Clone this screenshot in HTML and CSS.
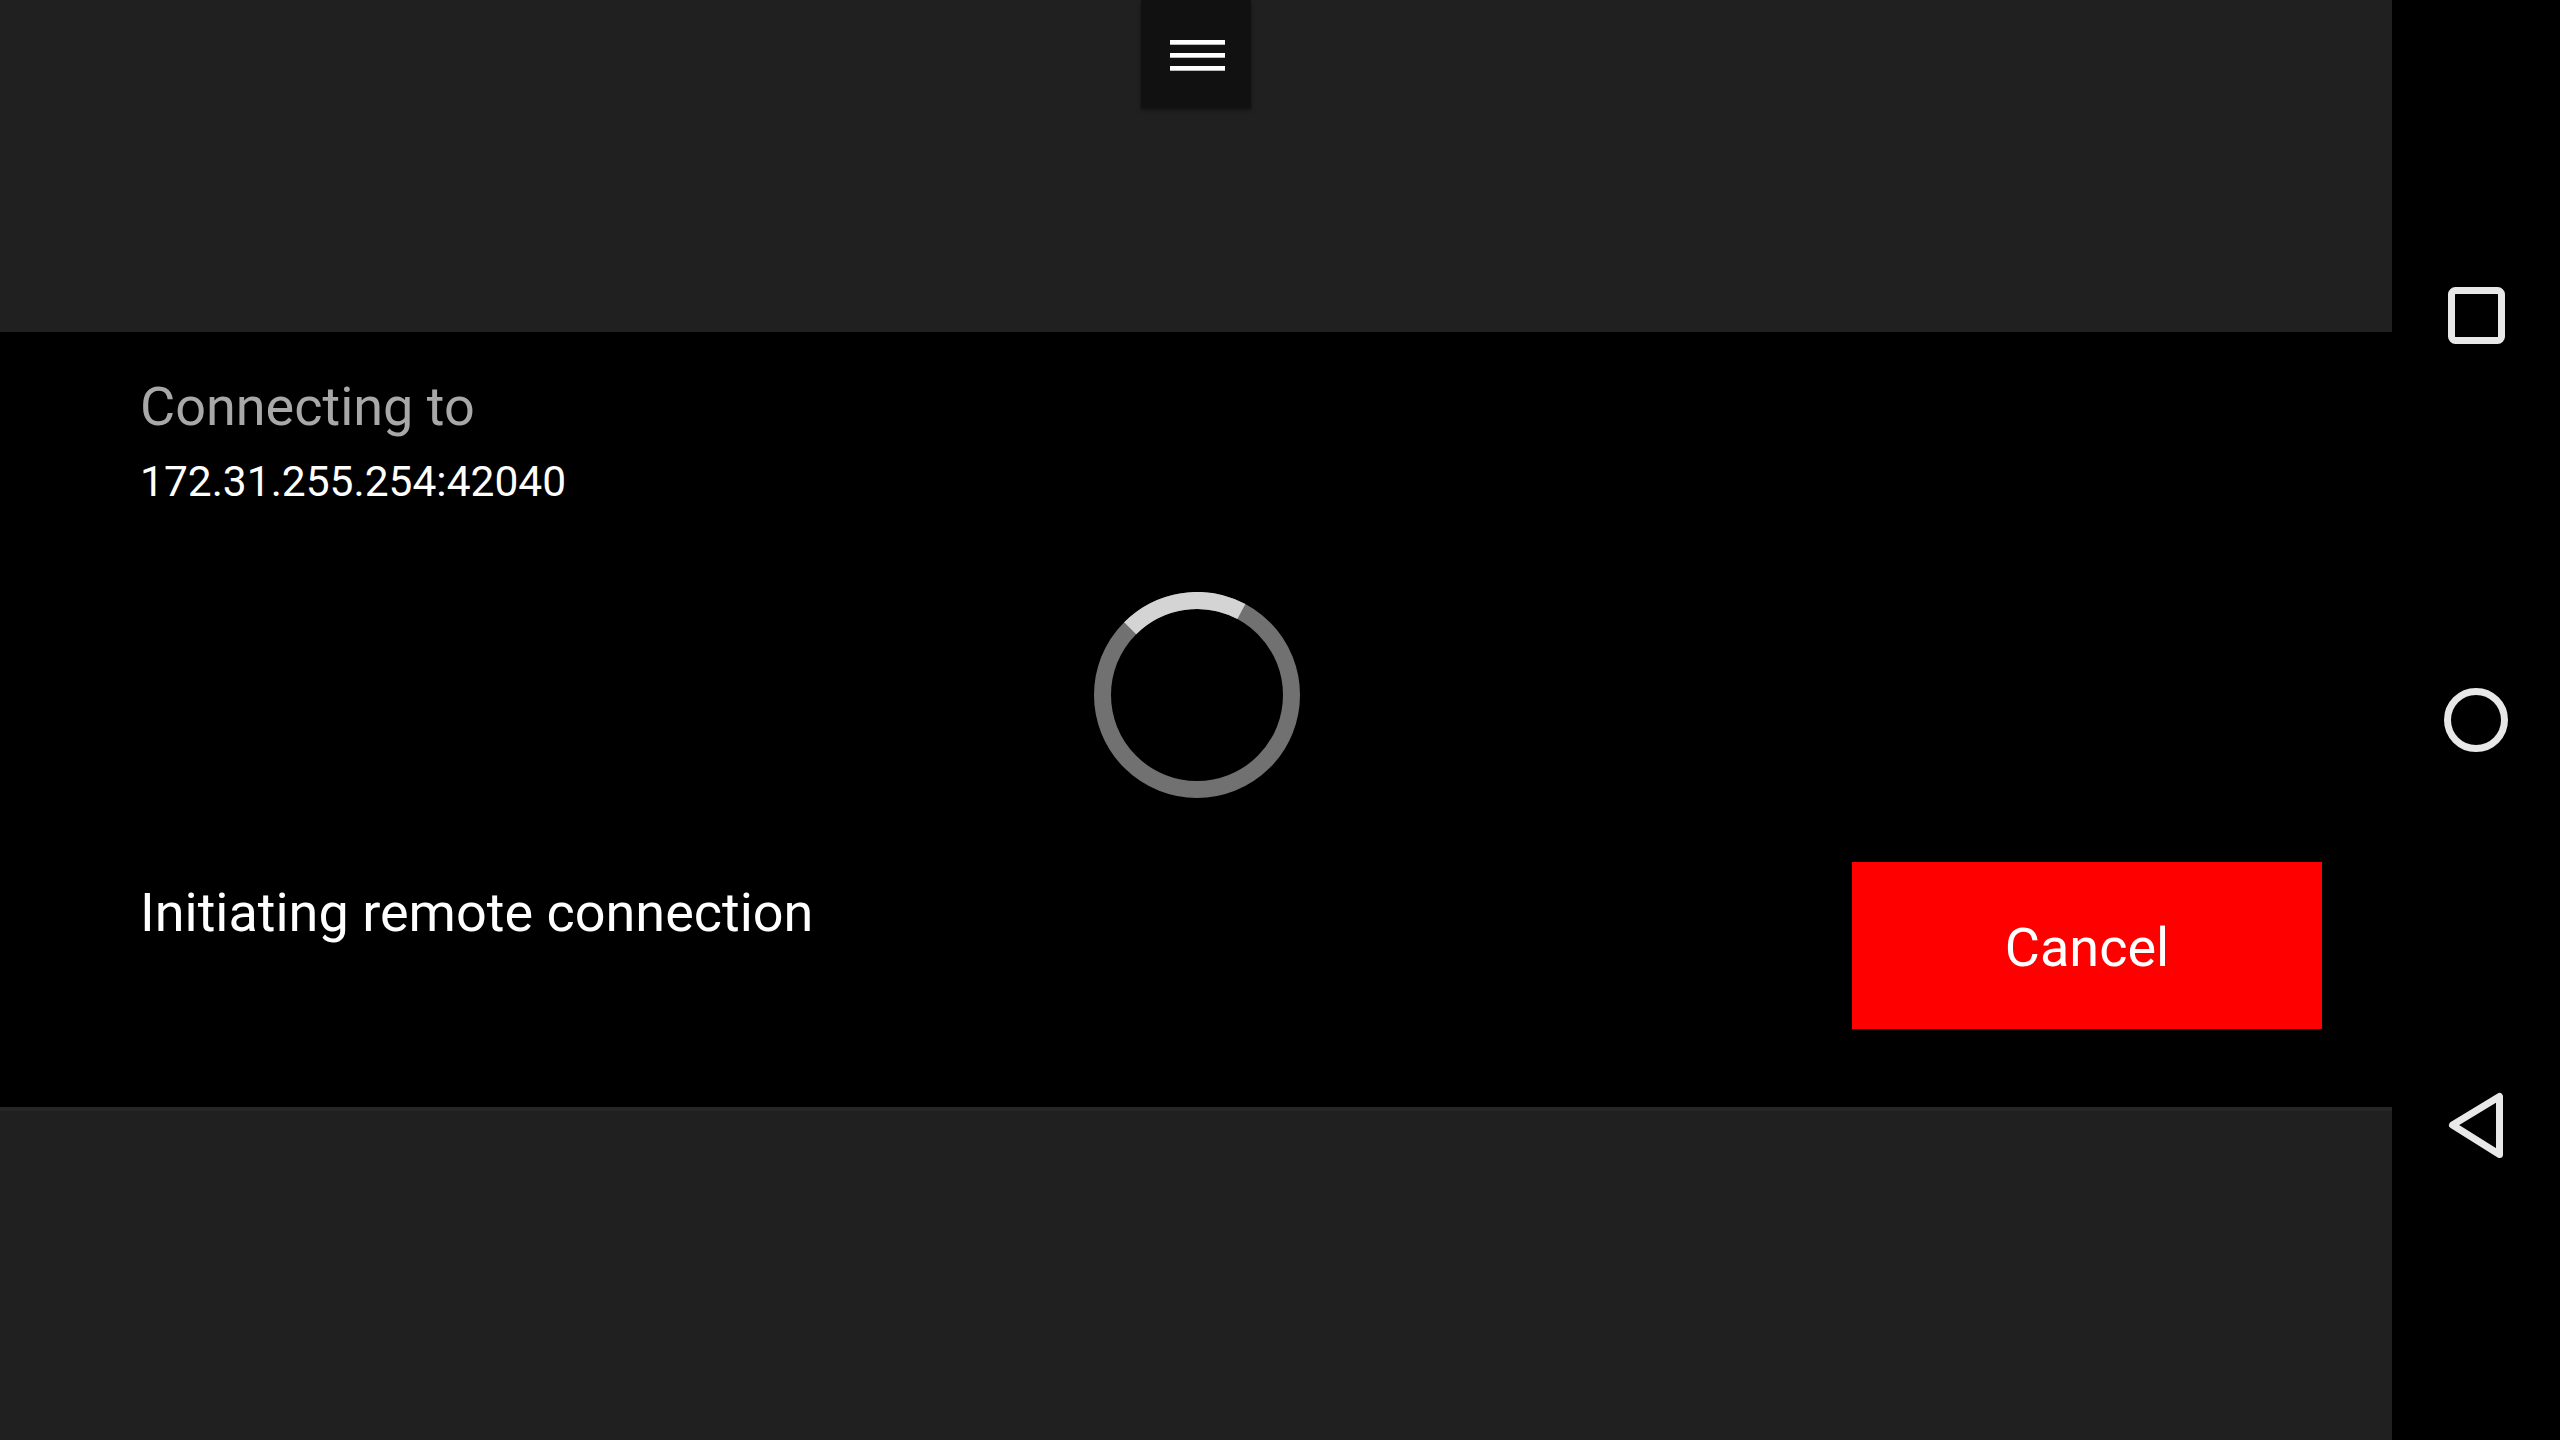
FILE: index.html
```html
<!DOCTYPE html>
<html lang="en">
<head>
<meta charset="utf-8">
<title>Connecting</title>
<link rel="stylesheet" href="styles.css">
</head>
<body>
<div class="screen">
  <main class="app">
    <header class="top">
      <button class="menu-btn" aria-label="Menu">
        <svg width="55" height="31" viewBox="0 0 55 31"><rect x="0" y="0" width="55" height="4.7" fill="#fff"/><rect x="0" y="13" width="55" height="4.7" fill="#fff"/><rect x="0" y="26" width="55" height="4.7" fill="#fff"/></svg>
      </button>
    </header>
    <section class="dialog">
      <div class="label">Connecting to</div>
      <div class="address">172.31.255.254:42040</div>
      <div class="spinner-wrap">
        <svg class="spinner" width="206" height="206" viewBox="0 0 206 206">
          <circle cx="103" cy="103" r="94.5" fill="none" stroke="#717171" stroke-width="17"/>
          <path d="M36.18 36.18 A94.5 94.5 0 0 1 147.37 19.56" fill="none" stroke="#d4d4d4" stroke-width="17"/>
        </svg>
      </div>
      <div class="status-row">
        <div class="status">Initiating remote connection</div>
        <button class="cancel">Cancel</button>
      </div>
    </section>
    <div class="bottom"></div>
  </main>
  <nav class="navbar">
    <svg width="80" height="80" viewBox="0 0 80 80"><rect x="15.5" y="15.5" width="50" height="50" rx="4" fill="none" stroke="#e8e8e8" stroke-width="7"/></svg>
    <svg width="80" height="80" viewBox="0 0 80 80"><circle cx="40" cy="40" r="28.5" fill="none" stroke="#e8e8e8" stroke-width="7"/></svg>
    <svg width="80" height="80" viewBox="0 0 80 80"><path d="M16.5 40 L63.5 11.5 L63.5 69.5 Z" fill="none" stroke="#e8e8e8" stroke-width="7" stroke-linejoin="round"/></svg>
  </nav>
</div>
</body>
</html>
```

FILE: styles.css
```css
* {
  box-sizing: border-box;
}

html, body {
  margin: 0;
  padding: 0;
  width: 2560px;
  height: 1440px;
  background: #000;
  overflow: hidden;
  font-family: Roboto, "Noto Sans", "Liberation Sans", sans-serif;
}

.screen {
  display: flex;
  width: 2560px;
  height: 1440px;
}

.app {
  flex: 1;
  display: flex;
  flex-direction: column;
  background: #202020;
}

.top {
  height: 332px;
  display: flex;
  justify-content: center;
  align-items: flex-start;
}

.menu-btn {
  width: 110px;
  height: 108px;
  margin: 0;
  border: none;
  background: #111111;
  padding: 3px 0 0 2px;
  display: flex;
  align-items: center;
  justify-content: center;
  box-shadow: 0 2px 4px rgba(0, 0, 0, 0.45);
}

.menu-btn svg {
  display: block;
}

.dialog {
  background: #000;
  padding: 43px 70px 78px 140px;
  display: flex;
  flex-direction: column;
}

.label {
  font-size: 54px;
  line-height: 64px;
  color: #a8a8a8;
}

.address {
  margin-top: 19px;
  font-size: 42.5px;
  line-height: 48px;
  color: #ffffff;
}

.spinner-wrap {
  margin-top: 86px;
  display: flex;
  justify-content: center;
  padding-right: 69px;
}

.spinner {
  display: block;
}

.status-row {
  margin-top: 64px;
  display: flex;
  justify-content: space-between;
  align-items: flex-start;
}

.status {
  margin-top: 18px;
  font-size: 54px;
  line-height: 66px;
  color: #ffffff;
}

.cancel {
  width: 470px;
  height: 167px;
  margin: 0;
  border: none;
  background: #ff0000;
  color: #ffffff;
  font-family: Roboto, "Noto Sans", "Liberation Sans", sans-serif;
  font-size: 54px;
  line-height: 66px;
  padding: 5px 0 0 0;
}

.bottom {
  flex: 1;
  background: #202020;
  border-top: 4px solid #262626;
}

.navbar {
  width: 168px;
  background: #000;
  display: flex;
  flex-direction: column;
  align-items: center;
  justify-content: center;
  gap: 325px;
}

.navbar svg {
  display: block;
}
```
